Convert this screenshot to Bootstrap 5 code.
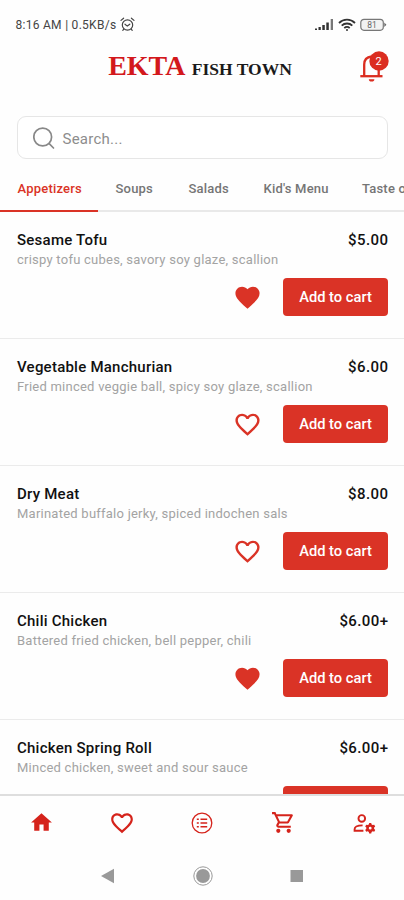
<!DOCTYPE html>
<html lang="en">
<head>
<meta charset="utf-8">
<meta name="viewport" content="width=device-width, initial-scale=1">
<title>Ekta Fish Town</title>
<link href="https://cdn.jsdelivr.net/npm/bootstrap@5.3.0/dist/css/bootstrap.min.css" rel="stylesheet">
<style>
  :root { --brand: #da3326; }
  body { font-family: Roboto, sans-serif; color: #111; background: #fefefe; line-height: 1; overflow-x: hidden; }
  svg { display: block; flex: none; }
  .phone { width: 404px; height: 900px; }
  .status { height: 48px; font-size: 12px; color: #444; padding: 1px 17px 0 15.5px; flex: none; }
  .status-time { letter-spacing: .28px; }
  .masthead { height: 68px; flex: none; }
  .masthead-side { width: 45px; }
  .brand { font-family: "Liberation Serif", serif; font-weight: 700; font-size: 17.5px; color: #1a1a1a; padding: 4px 4px 0 0; }
  .brand-lead { font-size: 28px; color: #d3181c; margin-right: 2px; }
  .bell { padding-top: 2px; }
  .search { height: 43px; margin: 0 16px 0 17px; border: 1px solid #e6e6e6; border-radius: 9px; padding: 1px 15px 0; color: #8d8d8d; font-size: 15px; letter-spacing: .25px; background: #fff; }
  .search-hint { padding-top: 2px; margin-left: 7.5px; }
  .tabs { height: 53px; font-size: 13px; font-weight: 500; color: #757575; border-bottom: 2px solid #e9e9e9; letter-spacing: .2px; }
  .tab { position: relative; flex: none; padding: 23px 0 0 17.5px; white-space: nowrap; }
  .tab.active { color: var(--brand); }
  .tab.active::after { content: ""; position: absolute; left: 0; right: 0; bottom: -2px; height: 2px; background: var(--brand); }
  .tab-1 { width: 98px; } .tab-2 { width: 73px; } .tab-3 { width: 75px; } .tab-4 { width: 98.5px; }
  .menu-list { flex: 1 1 0; min-height: 0; }
  .dish { height: 127px; padding: 20px 16px 0 17px; border-bottom: 1px solid #ebebeb; flex: none; }
  .dish-name { font-size: 15px; font-weight: 500; line-height: 17px; letter-spacing: .24px; }
  .price { letter-spacing: .4px; margin-right: -.4px; }
  .dish-note { font-size: 13px; line-height: 16px; letter-spacing: .24px; color: #a3a3a3; margin-top: 3px; white-space: nowrap; }
  .dish-actions { gap: 21px; margin-top: 10px; }
  .btn-cart { width: 105px; height: 38px; padding: 1px 0 0; border: 0; border-radius: 4px; background: var(--brand); color: #fff; font-size: 14.7px; font-weight: 500; }
  .btn-cart:hover { background: #c02a1f; color: #fff; }
  .tabbar { height: 57px; border-top: 2px solid #dedede; color: #d5231b; background: #fefefe; flex: none; padding: 0 0 2px 1px; }
  .sysbar { height: 49px; flex: none; color: #999; padding: 0 100px; }
</style>
</head>
<body>
<svg width="0" height="0" class="d-none">
  <symbol id="heart" viewBox="0 0 24 24"><path fill="currentColor" d="M12 21.35l-1.45-1.32C5.4 15.36 2 12.28 2 8.5 2 5.42 4.42 3 7.5 3c1.74 0 3.41.81 4.5 2.09C13.09 3.81 14.76 3 16.5 3 19.58 3 22 5.42 22 8.5c0 3.78-3.4 6.86-8.55 11.54L12 21.35z"/></symbol>
  <symbol id="heart-line" viewBox="0 0 24 24"><path fill="currentColor" d="M16.5 3c-1.74 0-3.41.81-4.5 2.09C10.91 3.81 9.24 3 7.5 3 4.42 3 2 5.42 2 8.5c0 3.78 3.4 6.86 8.55 11.54L12 21.35l1.45-1.32C18.6 15.36 22 12.28 22 8.5 22 5.42 19.58 3 16.5 3zm-4.4 15.55l-.1.1-.1-.1C7.14 14.24 4 11.39 4 8.5 4 6.5 5.5 5 7.5 5c1.54 0 3.04.99 3.57 2.36h1.87C13.46 5.99 14.96 5 16.5 5c2 0 3.5 1.5 3.5 3.5 0 2.89-3.14 5.74-7.9 10.05z"/></symbol>
</svg>
<div class="phone mx-auto d-flex flex-column overflow-hidden">
  <div class="status d-flex align-items-center justify-content-between">
    <div class="d-flex align-items-center gap-1">
      <span class="status-time">8:16 AM | 0.5KB/s</span>
      <svg width="15" height="15" viewBox="0 0 15 15" fill="none" stroke="#444" stroke-width="1.2" stroke-linecap="round"><circle cx="7.5" cy="8" r="5.2"/><path d="M1 3.4 3.6 1.2M14 3.4 11.4 1.2M5 7.2l2.3 1.9 2.5-1.9M3.8 12.2 2.8 13.4M11.2 12.2l1 1.2"/></svg>
    </div>
    <div class="d-flex align-items-center">
      <svg width="19" height="13" viewBox="0 0 19 13" fill="#333"><path d="M0 10.5h2V12H0zM3.5 9h2.3v3H3.5zM7.3 7h2.5v5H7.3zM11.3 4.5h2.5V12h-2.5z"/><path d="M15.7 1h2.3v11h-2.3z" fill="#777"/></svg>
      <svg class="ms-1" width="18" height="14" viewBox="0 0 18 14" fill="none" stroke="#333" stroke-width="1.8"><path d="M1 5a11.3 11.3 0 0 1 16 0M3.7 7.7a7.5 7.5 0 0 1 10.6 0M6.3 10.1a3.9 3.9 0 0 1 5.4 0"/><circle cx="9" cy="12" r="1" fill="#333" stroke="none"/></svg>
      <svg class="ms-1" width="27" height="14" viewBox="0 0 27 14"><rect x=".8" y="1.3" width="22.5" height="11" rx="3.2" fill="#f2f2f2" stroke="#777" stroke-width="1.2"/><path d="M24.3 4.5 26.4 6.8 24.3 9.1z" fill="#666"/><text x="12" y="9.9" font-size="8.5" text-anchor="middle" fill="#666" font-family="Roboto, sans-serif">81</text></svg>
    </div>
  </div>
  <header class="masthead d-flex justify-content-between">
    <div class="masthead-side"></div>
    <div class="brand"><span class="brand-lead">EKTA</span> FISH TOWN</div>
    <div class="masthead-side bell">
      <svg width="32" height="34" viewBox="0 0 32 34"><g fill="none" stroke="#db2d20" stroke-width="2.3"><path d="M5.2 26V14.5C5.2 9.8 8.3 7 12.5 6.5c4.3.5 7.2 3.4 7.2 8V26"/><path d="M1.3 26.2h22.2"/></g><path d="M9.8 29.2h5.6a2.8 2.4 0 0 1-5.6 0z" fill="#db2d20"/><circle cx="20" cy="11" r="9.7" fill="#db2d20"/><text x="19.6" y="15" font-size="11" text-anchor="middle" fill="#fff" font-family="Roboto, sans-serif">2</text></svg>
    </div>
  </header>
  <div class="search d-flex align-items-center flex-shrink-0">
    <svg width="22" height="23" viewBox="0 0 22 23" fill="none" stroke="#888" stroke-width="1.7" stroke-linecap="round"><circle cx="9.7" cy="10" r="8.9"/><path d="m16.2 16.6 4.3 4.4"/></svg>
    <span class="search-hint">Search...</span>
  </div>
  <nav class="tabs d-flex flex-shrink-0">
    <div class="tab tab-1 active">Appetizers</div><div class="tab tab-2">Soups</div><div class="tab tab-3">Salads</div><div class="tab tab-4">Kid's Menu</div><div class="tab">Taste of</div>
  </nav>
  <main class="menu-list overflow-hidden d-flex flex-column">
    <section class="dish">
      <div class="dish-name d-flex justify-content-between"><span>Sesame Tofu</span><span class="price">$5.00</span></div>
      <div class="dish-note">crispy tofu cubes, savory soy glaze, scallion</div>
      <div class="dish-actions d-flex justify-content-end align-items-center"><svg width="29" height="29" color="#da3326"><use href="#heart"/></svg><button class="btn btn-cart">Add to cart</button></div>
    </section>
    <section class="dish">
      <div class="dish-name d-flex justify-content-between"><span>Vegetable Manchurian</span><span class="price">$6.00</span></div>
      <div class="dish-note">Fried minced veggie ball, spicy soy glaze, scallion</div>
      <div class="dish-actions d-flex justify-content-end align-items-center"><svg width="29" height="29" color="#da3326"><use href="#heart-line"/></svg><button class="btn btn-cart">Add to cart</button></div>
    </section>
    <section class="dish">
      <div class="dish-name d-flex justify-content-between"><span>Dry Meat</span><span class="price">$8.00</span></div>
      <div class="dish-note">Marinated buffalo jerky, spiced indochen sals</div>
      <div class="dish-actions d-flex justify-content-end align-items-center"><svg width="29" height="29" color="#da3326"><use href="#heart-line"/></svg><button class="btn btn-cart">Add to cart</button></div>
    </section>
    <section class="dish">
      <div class="dish-name d-flex justify-content-between"><span>Chili Chicken</span><span class="price">$6.00+</span></div>
      <div class="dish-note">Battered fried chicken, bell pepper, chili</div>
      <div class="dish-actions d-flex justify-content-end align-items-center"><svg width="29" height="29" color="#da3326"><use href="#heart"/></svg><button class="btn btn-cart">Add to cart</button></div>
    </section>
    <section class="dish">
      <div class="dish-name d-flex justify-content-between"><span>Chicken Spring Roll</span><span class="price">$6.00+</span></div>
      <div class="dish-note">Minced chicken, sweet and sour sauce</div>
      <div class="dish-actions d-flex justify-content-end align-items-center"><button class="btn btn-cart" aria-label="Add to cart"></button></div>
    </section>
  </main>
  <nav class="tabbar row row-cols-5 g-0 align-items-center">
    <div class="d-flex justify-content-center"><svg width="25" height="25" viewBox="0 0 24 24" fill="currentColor"><path d="M10 20v-6h4v6h5v-8h3L12 3 2 12h3v8z"/></svg></div>
    <div class="d-flex justify-content-center"><svg width="26" height="26"><use href="#heart-line"/></svg></div>
    <div class="d-flex justify-content-center"><svg width="22" height="22" viewBox="0 0 22 22" fill="none" stroke="currentColor"><circle cx="11" cy="11" r="9.8" stroke-width="1.3"/><path d="M5.8 7.3h2M5.8 11h2M5.8 14.7h2M9.5 7.3h6.7M9.5 11h6.7M9.5 14.7h6.7" stroke-width="1.5"/></svg></div>
    <div class="d-flex justify-content-center"><svg width="25" height="25" viewBox="0 0 24 24" fill="currentColor"><path d="M15.55 13c.75 0 1.41-.41 1.75-1.03l3.58-6.49c.37-.66-.11-1.48-.87-1.48H5.21l-.94-2H1v2h2l3.6 7.59-1.35 2.44C4.52 15.37 5.48 17 7 17h12v-2H7l1.1-2h7.45zM6.16 6h12.15l-2.76 5H8.53L6.16 6z"/><circle cx="7" cy="20" r="2"/><circle cx="17" cy="20" r="2"/></svg></div>
    <div class="d-flex justify-content-center"><svg width="24" height="24" viewBox="0 0 24 24" fill="none" stroke="currentColor" stroke-width="1.9"><circle cx="9.8" cy="7.4" r="3.3"/><path d="M11.4 19.8H2.6v-1.6c0-2.5 3.5-3.8 8-3.8"/><path stroke="none" fill="currentColor" fill-rule="evenodd" d="m17.2 12h2l.4 1.5 1.1.6 1.5-.4 1 1.8-1.1 1.1v1.2l1.1 1.1-1 1.8-1.5-.4-1.1.6-.4 1.5h-2l-.4-1.5-1.1-.6-1.5.4-1-1.8 1.1-1.1V16.6l-1.1-1.1 1-1.8 1.5.4 1.1-.6zM18.2 15.8a1.4 1.4 0 1 0 0 2.8 1.4 1.4 0 0 0 0-2.8z"/></svg></div>
  </nav>
  <div class="sysbar d-flex justify-content-between align-items-center">
    <svg width="15" height="16" viewBox="0 0 15 16" fill="currentColor"><path d="M1 8 14 .8v14.4z"/></svg>
    <svg width="20" height="20" viewBox="0 0 20 20"><circle cx="10" cy="10" r="9.2" fill="none" stroke="currentColor"/><circle cx="10" cy="10" r="6.9" fill="currentColor"/></svg>
    <svg width="14" height="14" viewBox="0 0 14 14" fill="currentColor"><path d="M.5 1H13v12H.5z"/></svg>
  </div>
</div>
<script src="https://cdn.jsdelivr.net/npm/bootstrap@5.3.0/dist/js/bootstrap.bundle.min.js"></script>
</body>
</html>
